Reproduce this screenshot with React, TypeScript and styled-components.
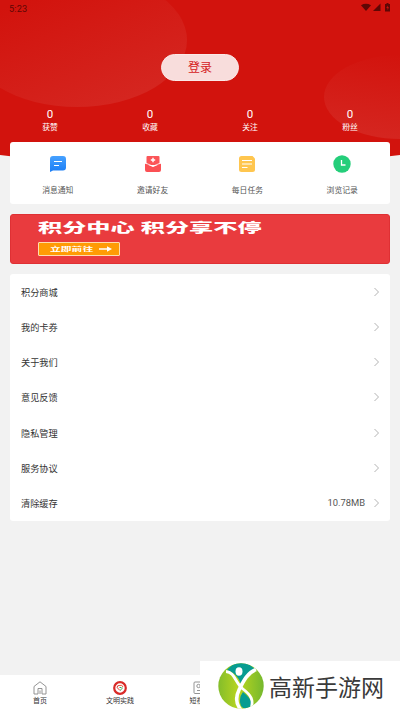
import React from "react";
import styled, { createGlobalStyle } from "styled-components";

const Global = createGlobalStyle`
  * { box-sizing: border-box; }
  body { margin: 0; background: #f2f2f2; font-family: Roboto, "Noto Sans CJK SC", sans-serif; color: #333; }
`;

const Screen = styled.div`
  position: relative;
  display: flex;
  flex-direction: column;
  width: 400px;
  height: 711px;
  overflow: hidden;
`;
const Backdrop = styled.svg`
  position: absolute;
  inset: 0 0 auto 0;
  z-index: -1;
`;
const StatusBar = styled.header`
  display: flex;
  justify-content: space-between;
  height: 17px;
  padding: 3px 9px 0;
  font-size: 9.2px;
  line-height: 12px;
  letter-spacing: .15px;
  color: #5f0705;
`;
const LoginButton = styled.button`
  align-self: center;
  width: 78px;
  height: 27px;
  margin-top: 37px;
  padding: 1px 0 0;
  border: 1px solid #fbe9e8;
  border-radius: 14px;
  background: #f8dddc;
  color: #d5201b;
  font: 12px/24px Roboto, "Noto Sans CJK SC", sans-serif;
`;
const Stats = styled.div`
  display: grid;
  grid-template-columns: repeat(4, 1fr);
  height: 61.4px;
  padding-top: 26px;
  text-align: center;
  color: #fff;
`;
const StatValue = styled.div`
  font-size: 11.5px;
  line-height: 14px;
`;
const StatLabel = styled.div`
  font-size: 7.8px;
  line-height: 13px;
`;
const Card = styled.section`
  margin: 0 10.4px;
  border-radius: 3px;
  background: #fff;
`;
const Shortcuts = styled(Card)`
  display: grid;
  grid-template-columns: repeat(4, 1fr);
  height: 62px;
  padding-top: 13px;
`;
const Shortcut = styled.div`
  display: flex;
  flex-direction: column;
  align-items: center;
  gap: 12px;
  font-size: 7.8px;
  line-height: 12px;
  color: #555;
`;
const Banner = styled(Card)`
  height: 50px;
  margin-top: 10px;
  padding: 4px 0 0 26.6px;
  border: 1px solid #df3034;
  background: #e93b3e;
  color: #fff;
`;
const BannerTitle = styled.div`
  width: max-content;
  font-size: 13px;
  font-weight: 900;
  line-height: 18px;
  white-space: nowrap;
  transform: scaleX(1.86);
  transform-origin: left;
`;
const BannerAction = styled.div`
  display: flex;
  align-items: center;
  width: 82px;
  height: 14px;
  margin-top: 5px;
  padding-left: 11px;
  border: 1px solid #ffdcae;
  border-radius: 1px;
  background: #ff9b05;
`;
const ActionText = styled.span`
  width: 49px;
  font-size: 6px;
  font-weight: 700;
  line-height: 12px;
  white-space: nowrap;
  transform: scale(1.8, .9);
  transform-origin: left;
`;
const Menu = styled(Card)`
  margin-top: 10px;
  height: 246.4px;
`;
const MenuRow = styled.div`
  display: flex;
  align-items: center;
  height: 35.15px;
  padding: 0 11px 0 10.6px;
  font-size: 9.2px;
`;
const Detail = styled.span`
  margin-left: auto;
  margin-right: 8.5px;
  font-size: 9.4px;
  color: #555;
`;
const TabBar = styled.nav`
  display: grid;
  grid-template-columns: repeat(5, 80px);
  height: 36px;
  margin-top: auto;
  background: #fff;
`;
const Tab = styled.div`
  display: flex;
  flex-direction: column;
  align-items: center;
  padding-top: 6px;
  font-size: 7px;
  line-height: 12px;
`;
const SiteMark = styled.aside`
  position: absolute;
  right: 0;
  bottom: 0;
  display: flex;
  align-items: center;
  width: 200px;
  height: 50px;
  padding-left: 18px;
  background: #fff;
`;
const SiteName = styled.span`
  margin-left: 5px;
  font: 400 23px/30px "Noto Sans CJK SC", sans-serif;
  color: #3a3a3a;
  white-space: nowrap;
`;

function HeaderArt() {
  return (
    <Backdrop width="400" height="160" viewBox="0 0 400 160">
      <defs>
        <linearGradient id="leftGlow" x1="0" y1="0" x2="0.7" y2="1">
          <stop offset=".25" stopColor="#d2130d" /><stop offset="1" stopColor="#d52620" />
        </linearGradient>
        <linearGradient id="rightGlow" x1=".6" y1="0" x2=".35" y2="1">
          <stop offset="0" stopColor="#d2130d" /><stop offset="1" stopColor="#d52620" />
        </linearGradient>
      </defs>
      <path d="M0 0H400V155Q200 180 0 155Z" fill="#d2130d" />
      <ellipse cx="77" cy="40" rx="110" ry="67" fill="url(#leftGlow)" />
      <ellipse cx="400" cy="97" rx="76" ry="42" fill="url(#rightGlow)" />
    </Backdrop>
  );
}

function StatusIcons() {
  return (
    <svg width="31" height="10" viewBox="0 0 31 10" fill="#5f0705">
      <path d="M1 2.300Q6 -.6 11 2.300L6 8Z" /><path d="M13 8L20.500 0.500V8Z" />
      <path d="M25 1h1.500V0h2v1H30v7.500h-5Z" /><path d="M27.800 2.500l-1.500 2.500h1.200v2l1.500-2.700h-1.200Z" fill="#d2130d" />
    </svg>
  );
}

const MessageIcon = () => (
  <svg width="18" height="18" viewBox="0 0 18 18">
    <defs><linearGradient id="blue" x2="0" y2="1"><stop stopColor="#46a1ff" /><stop offset="1" stopColor="#1b7df5" /></linearGradient></defs>
    <path d="M4 1H14Q17 1 17 4V12.500Q17 15.500 14 15.500H4L1 17V4Q1 1 4 1Z" fill="url(#blue)" />
    <path d="M5 6.500H13M5 10.500H10" stroke="#fff" strokeWidth="1.200" />
  </svg>
);
const InviteIcon = () => (
  <svg width="18" height="18" viewBox="0 0 18 18">
    <path d="M3.500 1H14.500Q15.500 1 15.500 2V10H2.500V2Q2.500 1 3.500 1Z" fill="#fb5558" />
    <path d="M1 8.500L9 12L17 8.500V15Q17 17 15 17H3Q1 17 1 15Z" fill="#fb5054" />
    <path d="M1 7.800L9 11.200L17 7.800" fill="none" stroke="#fff" strokeWidth=".8" />
    <path d="M9 2.800V7.200M6.800 5H11.200" stroke="#fff" strokeWidth="1.400" />
  </svg>
);
const TaskIcon = () => (
  <svg width="18" height="18" viewBox="0 0 18 18">
    <path d="M3.500 1H14.500L17 3.500V14.500Q17 17 14.500 17H3.500Q1 17 1 14.500V3.500Q1 1 3.500 1Z" fill="#ffc64f" />
    <path d="M4 5.500H14M4 9H14M4 12.500H9.500" stroke="#fff" strokeWidth="1.100" />
  </svg>
);
const HistoryIcon = () => (
  <svg width="18" height="18" viewBox="0 0 18 18">
    <circle cx="9" cy="9" r="8.700" fill="#24ce7a" />
    <path d="M8.500 5V10H12.500" fill="none" stroke="#fff" strokeWidth="1.300" />
  </svg>
);
const Arrow = () => (
  <svg width="13" height="6" viewBox="0 0 13 6" fill="#fff"><path d="M0 2.300H8V.2L13 3L8 5.800V3.700H0Z" /></svg>
);
const ChevronIcon = ({ className }: { className?: string }) => (
  <svg className={className} width="5" height="10" viewBox="0 0 5 10" fill="none" stroke="#aaa" strokeWidth=".9"><path d="M.5 1L4.500 5L.5 9" /></svg>
);
const Chevron = styled(ChevronIcon)`
  &:nth-child(2) { margin-left: auto; }
`;
const HomeIcon = () => (
  <svg width="14" height="14" viewBox="0 0 14 14" fill="none" stroke="#888" strokeWidth=".9"><path d="M1 13V5.500L7 .8L13 5.500V13H9V7.500H5V13ZM7 9.500V13" /></svg>
);
const PracticeIcon = () => (
  <svg width="14" height="14" viewBox="0 0 14 14" fill="none">
    <circle cx="7" cy="7" r="5.800" stroke="#d92b28" strokeWidth="2.200" />
    <path d="M7 9.500L4.200 6.700Q4 4.300 6 4.500" stroke="#dd3c30" />
    <path d="M6 4.500Q9.500 3.300 10 6" stroke="#e8533f" />
    <path d="M7 9.500L9.800 6.800M6.500 6.500H8.500" stroke="#3da85a" />
  </svg>
);
const VideoIcon = () => (
  <svg width="14" height="14" viewBox="0 0 14 14" fill="none" stroke="#888" strokeWidth=".9"><rect x="1" y="1" width="12" height="11.500" rx="1" /><circle cx="5.500" cy="5" r="1.700" /><path d="M4 9.500H10" /></svg>
);
const SiteLogo = () => (
  <svg width="46" height="46" viewBox="0 0 46 46">
    <defs>
      <linearGradient id="lime"><stop stopColor="#83bd2b" /><stop offset=".45" stopColor="#b9d51f" /><stop offset="1" stopColor="#74b82e" /></linearGradient>
      <clipPath id="disc"><circle cx="23" cy="23" r="22.700" /></clipPath>
    </defs>
    <g clipPath="url(#disc)">
      <rect width="46" height="46" fill="url(#lime)" />
      <path d="M9 7Q22-8 37 6Q29 10 23 21Q19 10 9 7Z" fill="#079c91" />
      <path d="M25 29Q36 38 33 43Q27 48 23 43Q20 35 25 29Z" fill="#079c91" />
      <path d="M8 8.500C17 9 17 20 25 26C33 32 36 37 33 46" fill="none" stroke="#fff" strokeWidth="2.800" />
      <path d="M38 6.500C29 10 25 19 21 27C17 35 18 41 23 47" fill="none" stroke="#fff" strokeWidth="3.600" />
      <ellipse cx="21" cy="8.500" rx="3.500" ry="4.200" fill="#fff" />
    </g>
  </svg>
);

const stats = ["获赞", "收藏", "关注", "粉丝"];
const shortcuts = [
  { label: "消息通知", Icon: MessageIcon },
  { label: "邀请好友", Icon: InviteIcon },
  { label: "每日任务", Icon: TaskIcon },
  { label: "浏览记录", Icon: HistoryIcon },
];
const menu: { label: string; detail?: string }[] = [
  { label: "积分商城" }, { label: "我的卡券" }, { label: "关于我们" }, { label: "意见反馈" },
  { label: "隐私管理" }, { label: "服务协议" }, { label: "清除缓存", detail: "10.78MB" },
];

export default function App() {
  return (
    <>
      <Global />
      <Screen>
        <HeaderArt />
        <StatusBar><span>5:23</span><StatusIcons /></StatusBar>
        <LoginButton>登录</LoginButton>
        <Stats>{stats.map((s) => <div key={s}><StatValue>0</StatValue><StatLabel>{s}</StatLabel></div>)}</Stats>
        <Shortcuts>{shortcuts.map(({ label, Icon }) => <Shortcut key={label}><Icon />{label}</Shortcut>)}</Shortcuts>
        <Banner>
          <BannerTitle>积分中心 积分享不停</BannerTitle>
          <BannerAction><ActionText>立即前往</ActionText><Arrow /></BannerAction>
        </Banner>
        <Menu>
          {menu.map(({ label, detail }) => (
            <MenuRow key={label}><span>{label}</span>{detail && <Detail>{detail}</Detail>}<Chevron /></MenuRow>
          ))}
        </Menu>
        <TabBar>
          <Tab><HomeIcon />首页</Tab>
          <Tab><PracticeIcon />文明实践</Tab>
          <Tab><VideoIcon />短视频</Tab>
        </TabBar>
        <SiteMark><SiteLogo /><SiteName>高新手游网</SiteName></SiteMark>
      </Screen>
    </>
  );
}
